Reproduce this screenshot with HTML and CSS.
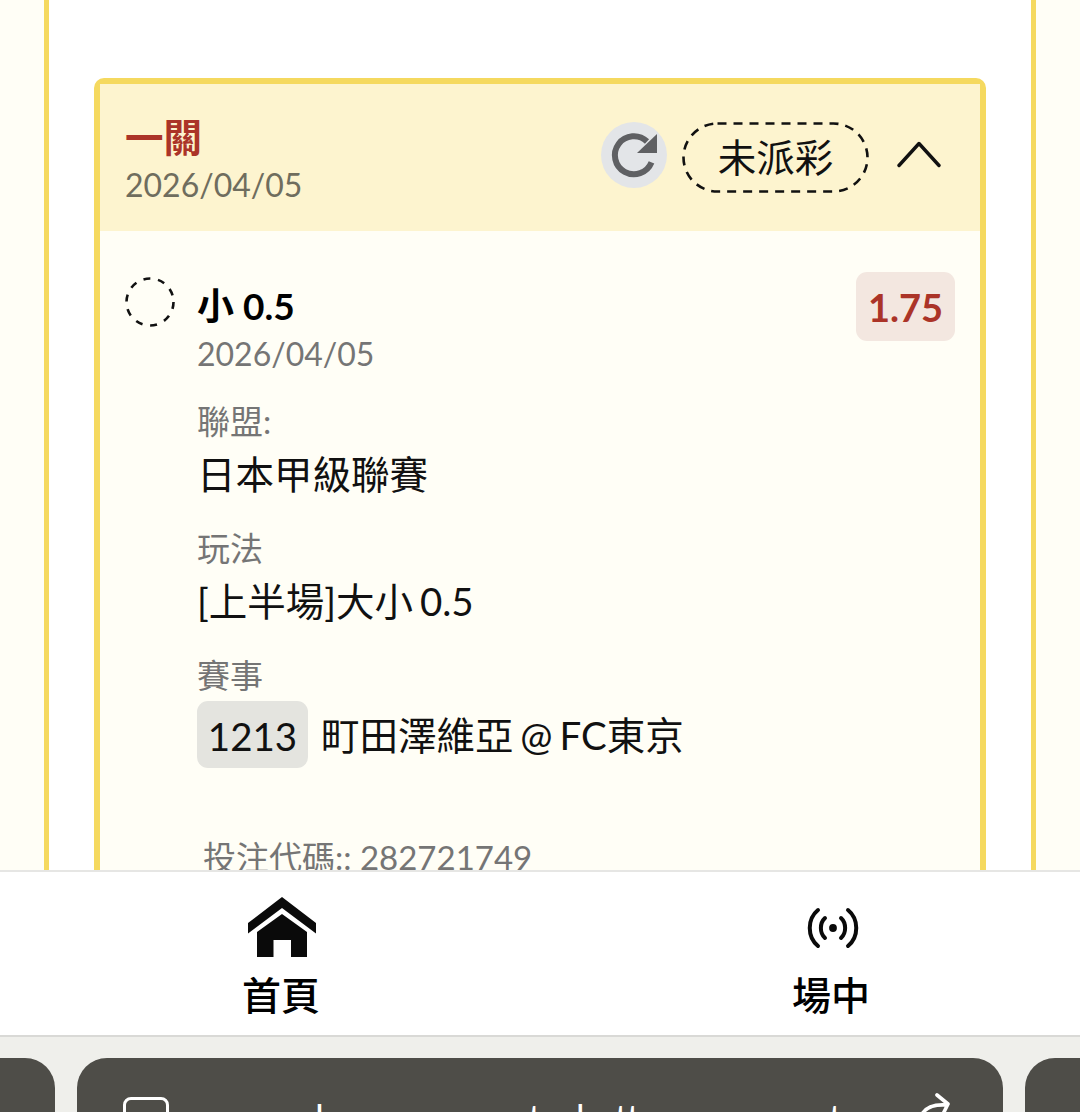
FILE: index.html
```html
<!DOCTYPE html>
<html lang="zh-Hant">
<head>
  <meta charset="UTF-8">
  <meta name="viewport" content="width=device-width, initial-scale=1.0">
  <title>投注記錄</title>
  <link rel="stylesheet" href="styles.css">
</head>
<body>
  <div class="app">
    <main class="scroll">
      <section class="outer">
        <article class="slip">
          <header class="slip-head">
            <div class="slip-title">
              <div class="slip-type">一關</div>
              <div class="slip-date">2026/04/05</div>
            </div>
            <div class="slip-actions">
              <button class="refresh" type="button" aria-label="refresh">
                <svg width="66" height="66" viewBox="0 0 66 66"><path d="M46 19.500A19 19 0 1 0 50.500 40.400" fill="none" stroke="#5f6063" stroke-width="6"/><path fill="#5f6063" d="M56 12V31H36z"/></svg>
              </button>
              <span class="status">
                <svg class="status-line" width="187" height="71" viewBox="0 0 187 71"><rect x="1.500" y="1.500" width="184" height="68" rx="34" fill="none" stroke="#111" stroke-width="2.600" stroke-dasharray="9 7"/></svg>
                未派彩
              </span>
              <svg class="chevron" width="44" height="28" viewBox="0 0 44 28"><path d="M2 25.500 22 3.500 42 25.500" fill="none" stroke="#111" stroke-width="3.400" stroke-linecap="round" stroke-linejoin="round"/></svg>
            </div>
          </header>
          <div class="slip-body">
            <div class="pick">
              <svg class="pick-dot" width="50" height="50" viewBox="0 0 50 50"><circle cx="25" cy="25" r="23.500" fill="none" stroke="#111" stroke-width="2.600" stroke-dasharray="7 7.770"/></svg>
              <div class="pick-info">
                <div class="pick-name">小 0.5</div>
                <div class="pick-date">2026/04/05</div>
              </div>
              <span class="odds">1.75</span>
            </div>
            <dl class="details">
              <dt>聯盟:</dt>
              <dd>日本甲級聯賽</dd>
              <dt>玩法</dt>
              <dd>[上半場]大小 0.5</dd>
              <dt>賽事</dt>
              <dd class="match"><span class="match-no">1213</span>町田澤維亞 @ FC東京</dd>
            </dl>
            <div class="code">投注代碼:: 282721749</div>
          </div>
        </article>
      </section>
    </main>

    <nav class="tabbar">
      <a class="tab">
        <span class="tab-icon tab-icon-home">
          <svg width="68" height="60" viewBox="0 0 68 60"><path fill="#0a0a0a" d="M34 0 68 26V36.500L34 11 0 36.500V26z"/><path fill="#0a0a0a" d="M34 17 59 35V60H43V43H25.500V60H9V35z"/></svg>
        </span>
        <span>首頁</span>
      </a>
      <a class="tab">
        <span class="tab-icon tab-icon-live">
          <svg width="52" height="42" viewBox="0 0 52 42"><g fill="none" stroke="#0a0a0a" stroke-width="4" stroke-linecap="round"><path d="M11 3C0 12 0 30 11 39"/><path d="M41 3C52 12 52 30 41 39"/><path d="M18 11C12.500 16 12.500 26 18 31"/><path d="M34 11C39.500 16 39.500 26 34 31"/></g><circle cx="26" cy="21" r="3.900" fill="#0a0a0a"/></svg>
        </span>
        <span>場中</span>
      </a>
    </nav>

    <footer class="browser">
      <div class="browser-tab browser-tab-side"></div>
      <div class="browser-tab browser-tab-main">
        <span class="browser-square"></span>
        <span class="browser-url">dsgameroomstashattersmanagert</span>
        <svg class="browser-reload" width="40" height="24" viewBox="0 0 40 24"><path d="M5 26C9 17 18 14 31 15M21 5 32 14 26 26" fill="none" stroke="#fff" stroke-width="3.600" stroke-linecap="round" stroke-linejoin="round"/></svg>
      </div>
      <div class="browser-tab browser-tab-side"></div>
    </footer>
  </div>
</body>
</html>
```

FILE: styles.css
```css
* {
  box-sizing: border-box;
}
html, body {
  margin: 0;
  padding: 0;
  height: 100%;
}
body {
  font-family: Lato, "Noto Sans CJK TC", "Noto Sans", sans-serif;
  background: #fffef6;
  color: #111;
}
.app {
  height: 1112px;
  display: flex;
  flex-direction: column;
  overflow: hidden;
}
.scroll {
  height: 870px;
  overflow: hidden;
  padding: 0 44px;
  flex: none;
}
.outer {
  height: 100%;
  background: #fff;
  border-left: 5px solid #f5d95f;
  border-right: 5px solid #f5d95f;
  padding: 78px 45px 0;
}
.slip {
  border: 6px solid #f5d95f;
  border-bottom: 0;
  border-radius: 10px 10px 0 0;
  background: #fffef6;
  height: 900px;
}
.slip-head {
  height: 147px;
  background: #fdf4cf;
  display: flex;
  align-items: flex-start;
  justify-content: space-between;
  padding: 28px 39px 0 25px;
}
.slip-type {
  font-size: 38.5px;
  font-weight: 700;
  line-height: 51px;
  color: #ab3428;
}
.slip-date {
  font-size: 32px;
  line-height: 44px;
  color: #6f6d5e;
}
.slip-actions {
  display: flex;
  align-items: center;
  margin-top: 10px;
}
.refresh {
  width: 66px;
  height: 66px;
  margin-bottom: 5px;
  border: 0;
  border-radius: 50%;
  background: #e3e5e8;
  padding: 0;
  display: flex;
}
.status {
  position: relative;
  width: 187px;
  height: 71px;
  margin-left: 15px;
  font-size: 38.5px;
  line-height: 71px;
  text-align: center;
}
.status-line {
  position: absolute;
  left: 0;
  top: 0;
}
.chevron {
  margin-left: 28px;
  margin-bottom: 8px;
}
.slip-body {
  padding: 41px 25px 0;
}
.pick {
  display: flex;
  align-items: flex-start;
}
.pick-dot {
  margin-top: 5px;
  flex: none;
}
.pick-info {
  margin-left: 22px;
  flex: 1;
}
.pick-name {
  font-size: 37px;
  font-weight: 700;
  line-height: 49px;
  margin-top: 9px;
  color: #000;
}
.pick-date {
  font-size: 32px;
  line-height: 48px;
  color: #757575;
}
.odds {
  width: 99px;
  height: 69px;
  border-radius: 11px;
  background: #f3e7e0;
  color: #ab3428;
  font-size: 38px;
  font-weight: 700;
  line-height: 71px;
  text-align: center;
}
.details {
  margin: 21px 0 0 72px;
}
.details dt {
  font-size: 33px;
  line-height: 44px;
  color: #757575;
}
.details dd {
  margin: 0 0 21px;
  font-size: 38.5px;
  line-height: 62px;
  word-spacing: -3px;
  color: #111;
}
.details .match {
  display: flex;
  align-items: center;
  height: 67px;
  margin: 4px 0 0;
}
.match-no {
  width: 111px;
  height: 67px;
  margin-right: 13px;
  border-radius: 11px;
  background: #e4e4df;
  line-height: 71px;
  text-align: center;
}
.code {
  margin: 67px 0 0 78px;
  font-size: 33px;
  line-height: 44px;
  color: #757575;
}
.tabbar {
  height: 167px;
  flex: none;
  background: #fff;
  border-top: 2px solid #e6e6e4;
  border-bottom: 2px solid #d9d9d6;
  padding-left: 6px;
  display: grid;
  grid-template-columns: 550px 550px;
  overflow: hidden;
}
.tab {
  display: flex;
  flex-direction: column;
  align-items: center;
  padding-top: 25px;
  font-size: 39px;
  font-weight: 500;
  line-height: 50px;
  color: #000;
}
.tab-icon {
  height: 62px;
  margin-bottom: 11px;
  display: flex;
  align-items: center;
}
.tab-icon-home {
  margin-left: 2px;
  align-items: flex-start;
}
.tab-icon-live {
  margin-left: 4px;
}
.browser {
  flex: 1;
  background: #efefeb;
  padding-top: 21px;
  display: flex;
  gap: 22px;
  margin-left: -30px;
  margin-right: -30px;
  overflow: hidden;
}
.browser-tab {
  background: #4e4d48;
  border-radius: 30px 30px 0 0;
  height: 60px;
}
.browser-tab-side {
  width: 85px;
  flex: none;
}
.browser-tab-main {
  flex: 1;
  position: relative;
  overflow: hidden;
  color: #fff;
}
.browser-square {
  position: absolute;
  left: 46px;
  top: 39px;
  width: 46px;
  height: 46px;
  border: 3px solid #fff;
  border-radius: 8px;
}
.browser-url {
  display: block;
  font-size: 37px;
  line-height: 50px;
  margin: 34px 0 0 226px;
  white-space: nowrap;
  color: #fff;
}
.browser-reload {
  position: absolute;
  right: 47px;
  top: 32px;
}
```
